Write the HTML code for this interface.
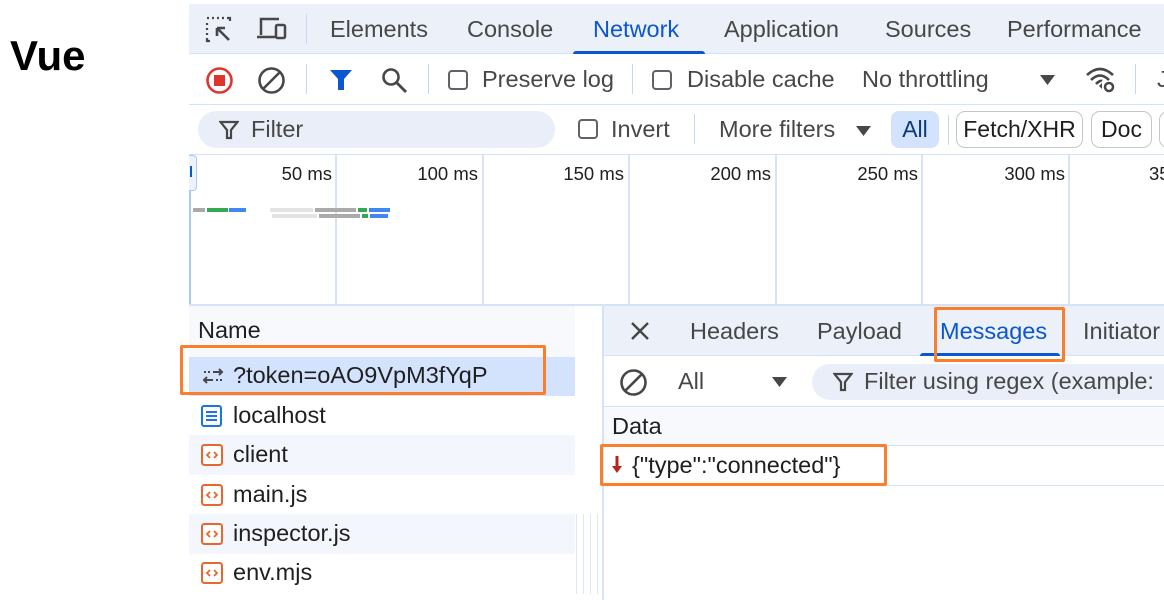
<!DOCTYPE html>
<html><head><meta charset="utf-8"><style>
*{margin:0;padding:0;box-sizing:border-box}
body{width:1164px;height:600px;overflow:hidden;background:#fff;font-family:"Liberation Sans",sans-serif;color:#1f1f1f;position:relative}
.a{position:absolute;white-space:nowrap}
.t{font-size:23.5px;color:#474747;top:16px}
.f{font-size:23.5px;color:#1f1f1f}
.cb{position:absolute;width:20px;height:20px;border:2px solid #5f6368;border-radius:4px}
.sep{position:absolute;width:1px;background:#c7d7ef}
.vl{position:absolute;width:2px;top:155px;height:150px;background:#d6e2f5}
.ms{position:absolute;font-size:18.5px;top:163px;color:#1f1f1f;text-align:right;width:90px}
.bar{position:absolute;height:4px}
.ob{position:absolute;border:3px solid #fb7f2a;border-radius:2px}
.row{position:absolute;left:189px;width:386px;height:40px}
.ric{position:absolute;left:201px}
.rt{position:absolute;left:233px;font-size:23.5px;color:#1f1f1f}
</style></head><body>
<div class="a" style="left:10px;top:32px;font-size:42px;font-weight:bold;color:#000">Vue</div>

<!-- tab bar -->
<div class="a" style="left:189px;top:4px;width:975px;height:50px;background:#ebf0f9;border-bottom:1px solid #d3e3fd"></div>
<svg class="a" style="left:205px;top:16px" width="30" height="28" viewBox="0 0 30 28"><path d="M2 2h2M7 2h2M12 2h2M17 2h2M22 2h3v3M2 7v2M2 12v2M2 17v2M2 22v3h3" stroke="#474747" stroke-width="2.2" fill="none"/><path d="M12 12l12 12M12 12v8M12 12h8" stroke="#474747" stroke-width="2.6" fill="none"/></svg>
<svg class="a" style="left:256px;top:17px" width="32" height="24" viewBox="0 0 32 24"><path d="M5 18V2h18" stroke="#474747" stroke-width="2.5" fill="none"/><path d="M1 20h18" stroke="#474747" stroke-width="2.5"/><rect x="20" y="8" width="9" height="13" rx="1.5" stroke="#474747" stroke-width="2.5" fill="none"/></svg>
<div class="sep" style="left:306px;top:14px;height:30px"></div>
<div class="a t" style="left:330px">Elements</div>
<div class="a t" style="left:467px">Console</div>
<div class="a t" style="left:593px;color:#0b57d0">Network</div>
<div class="a" style="left:573px;top:51px;width:132px;height:3px;background:#0b57d0;border-radius:3px 3px 0 0"></div>
<div class="a t" style="left:724px">Application</div>
<div class="a t" style="left:885px">Sources</div>
<div class="a t" style="left:1007px">Performance</div>

<!-- toolbar -->
<div class="a" style="left:189px;top:104px;width:975px;height:1px;background:#d3e3fd"></div>
<svg class="a" style="left:205px;top:66px" width="29" height="29"><circle cx="14.5" cy="14.5" r="12" stroke="#dc362e" stroke-width="2.6" fill="none"/><rect x="9" y="9" width="11" height="11" fill="#dc362e"/></svg>
<svg class="a" style="left:257px;top:66px" width="29" height="29"><circle cx="14.5" cy="14.5" r="12" stroke="#474747" stroke-width="2.6" fill="none"/><path d="M6 23L23 6" stroke="#474747" stroke-width="2.6"/></svg>
<div class="sep" style="left:306px;top:64px;height:30px"></div>
<svg class="a" style="left:329px;top:69px" width="24" height="22"><path d="M1 1h22l-8 9v11h-6V10z" fill="#0b57d0"/></svg>
<svg class="a" style="left:380px;top:66px" width="28" height="28"><circle cx="11" cy="11" r="7.5" stroke="#474747" stroke-width="2.6" fill="none"/><path d="M16.5 16.5L26 26" stroke="#474747" stroke-width="2.8"/></svg>
<div class="sep" style="left:428px;top:64px;height:30px"></div>
<div class="cb" style="left:448px;top:70px"></div>
<div class="a f" style="left:482px;top:66px;color:#474747">Preserve log</div>
<div class="sep" style="left:632px;top:64px;height:30px"></div>
<div class="cb" style="left:652px;top:70px"></div>
<div class="a f" style="left:687px;top:66px;color:#474747">Disable cache</div>
<div class="a f" style="left:862px;top:66px;color:#474747">No throttling</div>
<svg class="a" style="left:1040px;top:75px" width="15" height="11"><path d="M0 0h15L7.5 10z" fill="#474747"/></svg>
<svg class="a" style="left:1085px;top:65px" width="32" height="28" viewBox="0 0 32 28"><path d="M2 10Q15 -2 28 10M6 15Q15 6 24 15M11 19Q15 15 17 16" stroke="#474747" stroke-width="2.6" fill="none"/><circle cx="24" cy="22" r="4" stroke="#474747" stroke-width="2.5" fill="none"/><path d="M14 21l3 3v-6z" fill="#474747"/></svg>
<div class="sep" style="left:1135px;top:64px;height:30px"></div>
<div class="a f" style="left:1157px;top:66px;color:#474747">J</div>

<!-- filter row -->
<div class="a" style="left:189px;top:154px;width:975px;height:1px;background:#d3e3fd"></div>
<div class="a" style="left:198px;top:111px;width:357px;height:37px;background:#e9eef8;border-radius:19px"></div>
<svg class="a" style="left:219px;top:120px" width="20" height="20"><path d="M1.5 2h17l-6.5 8v8h-4v-8z" stroke="#474747" stroke-width="2.2" fill="none"/></svg>
<div class="a f" style="left:251px;top:116px;color:#474747">Filter</div>
<div class="cb" style="left:578px;top:119px"></div>
<div class="a f" style="left:611px;top:116px;color:#474747">Invert</div>
<div class="sep" style="left:694px;top:114px;height:30px"></div>
<div class="a f" style="left:719px;top:116px;color:#474747">More filters</div>
<svg class="a" style="left:856px;top:126px" width="15" height="11"><path d="M0 0h15L7.5 10z" fill="#474747"/></svg>
<div class="a" style="left:891px;top:111px;width:48px;height:37px;background:#d3e3fd;border-radius:8px;font-size:23px;text-align:center;line-height:37px;color:#0a3a7a">All</div>
<div class="sep" style="left:948px;top:115px;height:30px"></div>
<div class="a" style="left:956px;top:111px;width:127px;height:37px;border:1px solid #c4c7c5;border-radius:9px;font-size:23px;text-align:center;line-height:35px">Fetch/XHR</div>
<div class="a" style="left:1091px;top:111px;width:61px;height:37px;border:1px solid #c4c7c5;border-radius:9px;font-size:23px;text-align:center;line-height:35px">Doc</div>
<div class="a" style="left:1159px;top:111px;width:30px;height:37px;border:1px solid #c4c7c5;border-radius:9px"></div>

<!-- timeline -->
<div class="a" style="left:189px;top:155px;width:2px;height:150px;background:#a8c7fa"></div>
<div class="a" style="left:189px;top:155px;width:8px;height:36px;border:1px solid #a8c7fa;border-left:none;border-radius:0 4px 4px 0;background:#edf3fe"></div>
<div class="a" style="left:190px;top:166px;width:2px;height:11px;background:#0b57d0"></div>
<div class="vl" style="left:335px"></div><div class="vl" style="left:482px"></div><div class="vl" style="left:628px"></div><div class="vl" style="left:775px"></div><div class="vl" style="left:921px"></div><div class="vl" style="left:1068px"></div>
<div class="ms" style="left:242px">50 ms</div>
<div class="ms" style="left:388px">100 ms</div>
<div class="ms" style="left:534px">150 ms</div>
<div class="ms" style="left:681px">200 ms</div>
<div class="ms" style="left:828px">250 ms</div>
<div class="ms" style="left:975px">300 ms</div>
<div class="a" style="left:1149px;top:163px;font-size:18.5px">35</div>
<div class="bar" style="left:193px;top:208px;width:12px;background:#aaa"></div>
<div class="bar" style="left:207px;top:208px;width:21px;background:#34a853"></div>
<div class="bar" style="left:229px;top:208px;width:17px;background:#4285f4"></div>
<div class="bar" style="left:270px;top:208px;width:43px;background:#e3e3e3"></div>
<div class="bar" style="left:315px;top:208px;width:41px;background:#aaa"></div>
<div class="bar" style="left:358px;top:208px;width:9px;background:#34a853"></div>
<div class="bar" style="left:369px;top:208px;width:21px;background:#4285f4"></div>
<div class="bar" style="left:272px;top:214px;width:45px;background:#e3e3e3"></div>
<div class="bar" style="left:319px;top:214px;width:41px;background:#aaa"></div>
<div class="bar" style="left:362px;top:214px;width:6px;background:#34a853"></div>
<div class="bar" style="left:370px;top:214px;width:18px;background:#4285f4"></div>
<div class="a" style="left:189px;top:304px;width:975px;height:2px;background:#d6e2f5"></div>

<!-- left list -->
<div class="a" style="left:189px;top:306px;width:386px;height:294px;background:#f8f9fd"></div>
<div class="a f" style="left:198px;top:317px">Name</div>
<div class="row" style="top:357px;background:#d3e3fd"></div>
<div class="row" style="top:396px;background:#fff"></div>
<div class="row" style="top:435px;background:#f3f6fc"></div>
<div class="row" style="top:475px;background:#fff"></div>
<div class="row" style="top:514px;background:#f3f6fc"></div>
<div class="row" style="top:554px;background:#fff;height:46px"></div>
<div class="a" style="left:575px;top:306px;width:27px;height:294px;background:#fff"></div>
<div class="a" style="left:576px;top:514px;width:1px;height:80px;background:#dde6f5"></div>
<div class="a" style="left:583px;top:514px;width:1px;height:80px;background:#dde6f5"></div>
<div class="a" style="left:590px;top:514px;width:1px;height:80px;background:#dde6f5"></div>
<div class="a" style="left:597px;top:514px;width:1px;height:80px;background:#dde6f5"></div>
<div class="a" style="left:602px;top:306px;width:2px;height:294px;background:#d6e2f5"></div>
<svg class="a" style="left:202px;top:367px" width="22" height="18"><path d="M11 5h9M17 2l3 3-3 3M11 13H2M5 10l-3 3 3 3" stroke="#474747" stroke-width="2" fill="none"/><path d="M2 5h2M6 5h2M14 13h2M18 13h2" stroke="#474747" stroke-width="2"/></svg>
<div class="rt" style="top:362px">?token=oAO9VpM3fYqP</div>
<svg class="a" style="left:201px;top:405px" width="21" height="22"><rect x="1" y="1" width="19" height="20" rx="2" stroke="#1a73e8" stroke-width="2" fill="#fff"/><path d="M5 7h11M5 11h11M5 15h11" stroke="#1a73e8" stroke-width="2"/></svg>
<div class="rt" style="top:402px">localhost</div>
<svg class="ric" style="top:444px" width="22" height="22"><rect x="1" y="1" width="20" height="20" rx="2.5" stroke="#e8672c" stroke-width="2" fill="#fff"/><path d="M9 8l-3 3 3 3M13 8l3 3-3 3" stroke="#e8672c" stroke-width="1.8" fill="none"/></svg>
<div class="rt" style="top:441px">client</div>
<svg class="ric" style="top:484px" width="22" height="22"><rect x="1" y="1" width="20" height="20" rx="2.5" stroke="#e8672c" stroke-width="2" fill="#fff"/><path d="M9 8l-3 3 3 3M13 8l3 3-3 3" stroke="#e8672c" stroke-width="1.8" fill="none"/></svg>
<div class="rt" style="top:481px">main.js</div>
<svg class="ric" style="top:523px" width="22" height="22"><rect x="1" y="1" width="20" height="20" rx="2.5" stroke="#e8672c" stroke-width="2" fill="#fff"/><path d="M9 8l-3 3 3 3M13 8l3 3-3 3" stroke="#e8672c" stroke-width="1.8" fill="none"/></svg>
<div class="rt" style="top:520px">inspector.js</div>
<svg class="ric" style="top:562px" width="22" height="22"><rect x="1" y="1" width="20" height="20" rx="2.5" stroke="#e8672c" stroke-width="2" fill="#fff"/><path d="M9 8l-3 3 3 3M13 8l3 3-3 3" stroke="#e8672c" stroke-width="1.8" fill="none"/></svg>
<div class="rt" style="top:559px">env.mjs</div>

<!-- right pane -->
<div class="a" style="left:604px;top:306px;width:560px;height:50px;background:#ebf0f9;border-bottom:1px solid #d3e3fd"></div>
<svg class="a" style="left:630px;top:321px" width="20" height="20"><path d="M2 2l16 16M18 2L2 18" stroke="#474747" stroke-width="2.4"/></svg>
<div class="a t" style="left:690px;top:318px">Headers</div>
<div class="a t" style="left:817px;top:318px">Payload</div>
<div class="a t" style="left:940px;top:318px;color:#0b57d0">Messages</div>
<div class="a" style="left:920px;top:353px;width:140px;height:3px;background:#0b57d0;border-radius:3px 3px 0 0"></div>
<div class="a t" style="left:1083px;top:318px">Initiator</div>
<svg class="a" style="left:619px;top:368px" width="29" height="29"><circle cx="14.5" cy="14.5" r="12" stroke="#474747" stroke-width="2.6" fill="none"/><path d="M6 23L23 6" stroke="#474747" stroke-width="2.6"/></svg>
<div class="a f" style="left:678px;top:368px;color:#474747">All</div>
<svg class="a" style="left:772px;top:377px" width="15" height="11"><path d="M0 0h15L7.5 10z" fill="#474747"/></svg>
<div class="a" style="left:812px;top:364px;width:380px;height:36px;background:#e9eef8;border-radius:18px"></div>
<svg class="a" style="left:833px;top:372px" width="20" height="20"><path d="M1.5 2h17l-6.5 8v8h-4v-8z" stroke="#474747" stroke-width="2.2" fill="none"/></svg>
<div class="a f" style="left:864px;top:368px;color:#474747">Filter using regex (example:</div>
<div class="a" style="left:604px;top:406px;width:560px;height:40px;background:#f8f9fd;border-top:1px solid #d3e3fd;border-bottom:1px solid #d3e3fd"></div>
<div class="a f" style="left:612px;top:413px">Data</div>
<div class="a" style="left:604px;top:485px;width:560px;height:1px;background:#d3e3fd"></div>
<svg class="a" style="left:612px;top:456px" width="10" height="18"><path d="M5 0v12" stroke="#b3261e" stroke-width="3"/><path d="M0 10h10l-5 7z" fill="#b3261e"/></svg>
<div class="a f" style="left:632px;top:452px">{"type":"connected"}</div>

<!-- orange boxes -->
<div class="ob" style="left:180px;top:345px;width:366px;height:50px"></div>
<div class="ob" style="left:934px;top:307px;width:131px;height:55px"></div>
<div class="ob" style="left:600px;top:444px;width:287px;height:42px"></div>
</body></html>
